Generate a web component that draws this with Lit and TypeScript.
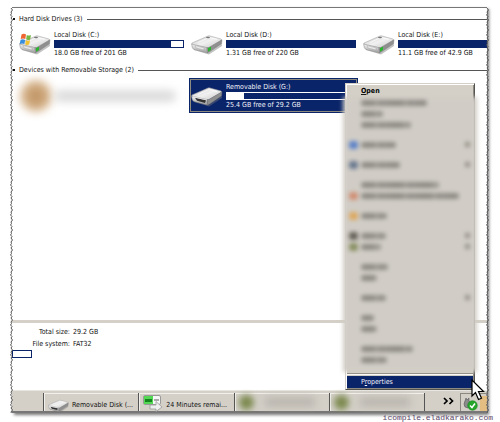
import { LitElement, html, css, svg, nothing } from "lit";
import { customElement, property } from "lit/decorators.js";

@customElement("drive-icon")
class DriveIcon extends LitElement {
  @property() kind = "disk";

  static styles = css`
    :host { display: block; flex: none; width: 32px; height: 22px; }
    svg { display: block; width: 100%; height: 100%; }
  `;

  render() {
    const system = this.kind === "system";
    const removable = this.kind === "removable";
    return html`<svg viewBox="0 0 32 22" aria-hidden="true">
      <defs>
        <linearGradient id="top" x1="0" y1="0" x2="1" y2="1">
          <stop offset="0" stop-color="#c4c4c4" /><stop offset=".5" stop-color="#f1f1f1" /><stop offset="1" stop-color="#c6c6c6" />
        </linearGradient>
        <linearGradient id="front" x1="0" y1="0" x2="0" y2="1">
          <stop offset="0" stop-color="#f4f4f4" /><stop offset="1" stop-color="#9c9c9c" />
        </linearGradient>
      </defs>
      <path d="M2 15 L18 20 L31 11 L31 13 L18 21.500 L3 17Z" fill="#777" opacity=".45" />
      <path d="M1 10 L17 3 Q18 2.500 19 3 L30 6 Q31 6.500 30 7.500 L18 14.500 Q16.500 15 15 14.700 L2 12 Q0 11 1 10Z" fill="url(#top)" stroke="#9a9a9a" stroke-width=".5" />
      <path d="M.6 11 L16 14.600 L16.500 20 L3 16.500 Q1 16 .6 11Z" fill="url(#front)" stroke="#8a8a8a" stroke-width=".5" />
      <path d="M16 14.600 Q17 15 18 14.400 L31 6.800 L30.500 11 L18 19.600 L16.500 20Z" fill="#8f8f8f" stroke="#777" stroke-width=".4" />
      <path d="M7 9.500 L18 4.500 L26 6.500" fill="none" stroke="#fff" stroke-width=".8" opacity=".8" />
      ${removable
        ? svg`<path d="M4 12.800 L15 15.200 L14 18 L6 15.800Z" fill="#333" /><path d="M2 11.700 L16 15" stroke="#eee" stroke-width=".8" />`
        : svg`<path d="M4 12.500 L13 14.800 L13 17 L5 15Z" fill="#e9e9e9" stroke="#999" stroke-width=".4" /><path d="M17 15 L20 13.800 L20 17 L17 18.800Z" fill="#29b52d" /><ellipse cx="17" cy="4.500" rx="2" ry=".7" fill="#777" />`}
      ${system
        ? svg`<path d="M2.500 1.500 Q5 .2 7 1.600 L6.300 6 Q4 4.800 1.700 6Z" fill="#ef6532" /><path d="M7.800 2 Q10 3 12 2 L11.200 6.400 Q9 7.500 7.100 6.300Z" fill="#75b843" /><path d="M1.600 6.800 Q4 5.700 6.100 7 L5.400 11 Q3 10 .7 11Z" fill="#378ddd" /><path d="M7 7.200 Q9 8.300 11 7.300 L10.200 11.600 Q8 12.600 6.200 11.400Z" fill="#f2c22f" />`
        : nothing}
    </svg>`;
  }
}

interface Drive { kind: string; name: string; free: string; used: number; selected?: boolean; }

@customElement("drive-tile")
class DriveTile extends LitElement {
  @property({ attribute: false }) drive!: Drive;

  static styles = css`
    :host { display: block; }
    .tile {
      box-sizing: border-box; width: 100%; height: 35px; display: flex; gap: 3px; align-items: center;
      padding: 0 1px; border: 1px solid transparent; background: none; color: #111;
      font: inherit; line-height: 10px; text-align: left; white-space: nowrap;
    }
    .selected { background: #0a246a; color: #f0f2f8; border: 1px solid #0a246a; outline: 1px solid #8e8b80; outline-offset: -2px; }
    .info { flex: 1; display: flex; flex-direction: column; }
    .bar { box-sizing: border-box; height: 8px; border: 1px solid #0a246a; background: #fff; display: block; }
    .fill { display: block; height: 100%; background: #0a246a; }
    .selected .bar { border-color: #fff; }
  `;

  render() {
    const d = this.drive;
    return html`<button class="tile ${d.selected ? "selected" : ""}">
      <drive-icon kind=${d.kind}></drive-icon>
      <span class="info">
        <span>${d.name}</span>
        ${d.selected
          ? html`<span class="bar" style="background: linear-gradient(90deg, #fff ${100 - d.used}%, #0a246a 0)"></span>`
          : html`<span class="bar"><span class="fill" style="width: ${d.used}%"></span></span>`}
        <span>${d.free}</span>
      </span>
    </button>`;
  }
}

interface MenuRow { width: number; icon?: string; arrow?: boolean; }

const menuGroups: MenuRow[][] = [
  [{ width: 66 }, { width: 22 }, { width: 50 }],
  [{ width: 35, icon: "#3f70c8", arrow: true }],
  [{ width: 39, icon: "#506482", arrow: true }],
  [{ width: 78 }, { width: 98, icon: "#d08060" }],
  [{ width: 26, icon: "#e0a048" }],
  [{ width: 25, icon: "#4c4840", arrow: true }, { width: 20, icon: "#76804a", arrow: true }],
  [{ width: 27 }, { width: 16 }],
  [{ width: 25, arrow: true }],
  [{ width: 13 }, { width: 16 }],
  [{ width: 52 }, { width: 26 }],
];

@customElement("context-menu")
class ContextMenu extends LitElement {
  static styles = css`
    :host { display: block; }
    .menu { box-sizing: border-box; padding: 1px; background: #d4d0c8; border: 1px solid #d4d0c8; border-right-color: #55534e; border-bottom-color: #55534e; box-shadow: inset 1px 1px #fff, inset -1px -1px #8c8980; }
    .item {
      display: flex; align-items: center; width: 100%; height: 12px; padding: 0 3px 0 14px; border: 0;
      background: none; font: inherit; line-height: 12px; text-align: left; color: #111;
    }
    .open { font-weight: bold; color: #000; }
    .properties { background: #0a246a; color: #f0f2f8; }
    .obscured { margin: 0 -4px; padding: 0 4px 7px; position: relative; }
    .obscured::before { content: ""; position: absolute; inset: 0; background: #d1cdc6; filter: blur(2px); }
    .obscured .item { height: 11px; }
    .group { position: relative; }
    .group + .group { padding-top: 9px; }
    .icon { width: 9px; height: 8px; margin-left: -12px; margin-right: 3px; border-radius: 3px; filter: blur(2px); opacity: .8; }
    .smear { height: 6px; border-radius: 3px; background: repeating-linear-gradient(90deg, #716e69 0 13px, #908c86 15px 16px, #77746f 18px 29px); filter: blur(2px); opacity: .7; }
    .arrow { width: 5px; height: 5px; margin-left: auto; background: #79766f; filter: blur(2px); opacity: .7; }
    .rule { height: 0; margin: 1px 0; border-top: 1px solid #817e76; border-bottom: 1px solid #fff; }
  `;

  render() {
    return html`<div class="menu">
      <button class="item open"><span><u>O</u>pen</span></button>
      <div class="obscured">
        ${menuGroups.map((group) => html`<div class="group">
          ${group.map((row) => html`<button class="item">
            ${row.icon ? html`<span class="icon" style="background: ${row.icon}"></span>` : nothing}
            <span class="smear" style="width: ${row.width}px"></span>
            ${row.arrow ? html`<span class="arrow"></span>` : nothing}
          </button>`)}
        </div>`)}
      </div>
      <div class="rule"></div>
      <button class="item properties"><span>P<u>r</u>operties</span></button>
    </div>`;
  }
}

@customElement("app-root")
class AppRoot extends LitElement {
  static styles = css`
    :host {
      display: flex; flex-direction: column; box-sizing: border-box; min-height: 100vh; padding: 7px 13px 0 12px;
      overflow: hidden; background: #fff; color: #111; font: 7px "DejaVu Sans Condensed", "DejaVu Sans", sans-serif;
    }
    .frame { position: relative; flex: 1; display: flex; flex-direction: column; border-top: 1px solid #777; box-shadow: 2px 2px 3px #777; background: #fff; }
    .clip { flex: 1; display: flex; flex-direction: column; overflow: hidden; }
    .edge { position: absolute; top: 0; width: 3px; height: 100%; }
    .left { left: -2px; }
    .right { right: -2px; }
    .drives { flex: 1; padding-top: 5px; }
    h2 { display: flex; align-items: center; gap: 4px; height: 12px; margin: 0; padding-left: 1px; font: inherit; white-space: nowrap; }
    h2::before { content: ""; width: 2px; height: 2px; background: #111; }
    h2::after { content: ""; flex: 1; height: 1px; background: #555; }
    .tiles { display: grid; grid-template-columns: repeat(3, 169px); gap: 3px; padding: 1px 0 3px 5px; }
    .tiles.second { padding-top: 2px; }
    .hidden-device { display: flex; align-items: center; gap: 2px; }
    .blob { flex: none; width: 32px; height: 32px; margin-left: 3px; border-radius: 50%; background: radial-gradient(#b98a58, #e2c6a2 80%); filter: blur(4px); }
    .streak { width: 122px; height: 12px; border-radius: 6px; background: #dcdcdc; filter: blur(4px); }
    .details { height: 67px; border-top: 3px solid #d4d0c8; }
    dl { display: grid; grid-template-columns: 58px auto; gap: 0 3px; margin: 0; padding-top: 3px; line-height: 12px; }
    dt { text-align: right; }
    dd { margin: 0; }
    .meter { box-sizing: border-box; width: 20px; height: 8px; border: 1px solid #0a246a; }
    .taskbar { display: flex; height: 23px; box-sizing: border-box; padding-top: 2px; background: #d4d0c8; border-top: 1px solid #e8e6e0; border-bottom: 2px solid #777; }
    .start { width: 31px; }
    .task { flex: 1; min-width: 0; display: flex; align-items: center; gap: 3px; padding: 6px 2px 0 4px; border: 0; border-left: 1px solid #555; box-shadow: inset 1px 1px #f2f0ec; background: none; font: inherit; color: #111; white-space: nowrap; }
    .task drive-icon { width: 21px; height: 15px; }
    .copy { width: 20px; height: 17px; flex: none; margin-top: -4px; }
    .blurred { padding-top: 0; }
    .green { width: 15px; height: 15px; border-radius: 50%; background: #7d8a50; filter: blur(3px); }
    .grey { width: 50px; height: 8px; background: #b4b1aa; filter: blur(4px); margin-left: 8px; }
    .more { width: 36px; padding: 0; border: 0; border-left: 1px solid #555; background: none; }
    .more svg { display: block; width: 12px; height: 8px; margin: 0 0 3px 18px; }
    .tray { width: 26px; display: flex; align-items: end; gap: 2px; border-left: 1px solid #8b887f; border-top: 1px solid #8b887f; }
    .tray svg { width: 15px; height: 14px; margin-left: 2px; flex: none; }
    .orange { width: 8px; height: 15px; background: #e3bd82; }
    context-menu { position: absolute; top: 75px; right: 12px; width: 130px; }
    .cursor { position: absolute; right: 2px; bottom: 12px; width: 14px; height: 22px; }
    .watermark { align-self: flex-end; margin-right: -6px; height: 9px; line-height: 9px; font-size: 8px; font-family: "Liberation Mono", monospace; color: #5b4668; text-decoration: none; position: relative; }
  `;

  private edge(side: string) {
    return html`<svg class="edge ${side}" aria-hidden="true">
      <defs><pattern id=${side} width="3" height="10" patternUnits="userSpaceOnUse">
        <path d="M1 0 L2.500 2 L1 4 L1.500 5.500 L.5 7 L2 8.500 L1 10" fill="none" stroke="#555" stroke-width="1" />
      </pattern></defs>
      <rect width="3" height="100%" fill="url(#${side})" />
    </svg>`;
  }

  render() {
    const disks: Drive[] = [
      { kind: "system", name: "Local Disk (C:)", free: "18.0 GB free of 201 GB", used: 91 },
      { kind: "disk", name: "Local Disk (D:)", free: "1.31 GB free of 220 GB", used: 100 },
      { kind: "disk", name: "Local Disk (E:)", free: "11.1 GB free of 42.9 GB", used: 74 },
    ];
    const removable: Drive = { kind: "removable", name: "Removable Disk (G:)", free: "25.4 GB free of 29.2 GB", used: 87, selected: true };
    return html`
      <main class="frame">
        <div class="clip">
          <section class="drives">
            <h2>Hard Disk Drives (3)</h2>
            <div class="tiles">${disks.map((d) => html`<drive-tile .drive=${d}></drive-tile>`)}</div>
            <h2>Devices with Removable Storage (2)</h2>
            <div class="tiles second">
              <div class="hidden-device"><span class="blob"></span><span class="streak"></span></div>
              <drive-tile .drive=${removable}></drive-tile>
            </div>
          </section>
          <section class="details">
            <dl><dt>Total size:</dt><dd>29.2 GB</dd><dt>File system:</dt><dd>FAT32</dd></dl>
            <div class="meter"></div>
          </section>
          <footer class="taskbar">
            <span class="start"></span>
            <button class="task"><drive-icon kind="removable"></drive-icon>Removable Disk (...</button>
            <button class="task">
              <svg class="copy" viewBox="0 0 20 17" aria-hidden="true">
                <rect x=".5" y=".5" width="17" height="9" rx="1.500" fill="#f6f6f6" stroke="#999" />
                <rect x="1" y="1" width="9" height="8" fill="#55d955" /><rect x="2" y="4" width="7" height="3" fill="#15851d" />
                <rect x="11" y="4" width="5" height="2" fill="#aaa" />
                <path d="M7 10 H13 V6.500 L19 12 L13 16.500 V14 H7Z" fill="#eee" stroke="#999" stroke-width=".8" />
              </svg>24 Minutes remai...
            </button>
            <button class="task blurred"><span class="green"></span><span class="grey"></span></button>
            <button class="task blurred"><span class="green"></span><span class="grey"></span></button>
            <button class="more"><svg viewBox="0 0 12 8" aria-hidden="true"><path d="M1 1 L4 4 L1 7 M6.500 1 L9.500 4 L6.500 7" fill="none" stroke="#000" stroke-width="1.700" /></svg></button>
            <span class="tray">
              <svg viewBox="0 0 15 14" aria-hidden="true">
                <path d="M2 4 L3 1 L4 3 L6 1 L6 4 Q8 5 7 9 L5 11 L2 10 Q0 7 2 4Z" fill="#8b8b8b" stroke="#555" stroke-width=".6" />
                <circle cx="9.500" cy="8.500" r="4.800" fill="#25a62a" stroke="#138018" stroke-width=".5" />
                <path d="M7 8.500 L9 10.500 L12 6.500" fill="none" stroke="#fff" stroke-width="1.500" />
              </svg>
              <span class="orange"></span>
            </span>
          </footer>
        </div>
        ${this.edge("left")}${this.edge("right")}
        <context-menu></context-menu>
        <svg class="cursor" viewBox="0 0 14 22" aria-hidden="true"><path d="M1 1 V17 L4.500 13.500 L7.500 20.500 L10.500 19.200 L7.500 12.500 H12.500Z" fill="#fff" stroke="#000" stroke-width="1.200" /></svg>
      </main>
      <a class="watermark" href="#">icompile.eladkarako.com</a>
    `;
  }
}
